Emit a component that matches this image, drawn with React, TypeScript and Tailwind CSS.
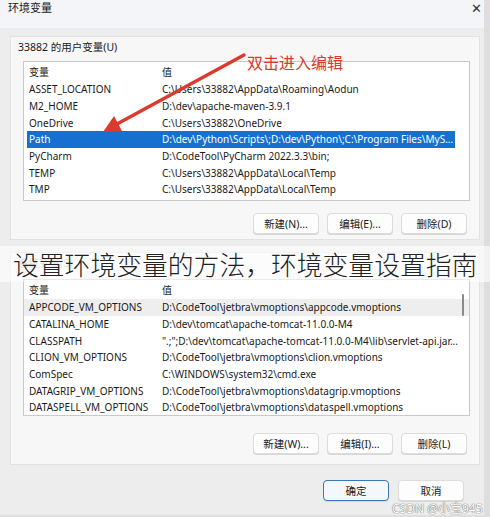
import React from 'react'

const userVars = [
  { name: 'ASSET_LOCATION', value: 'C:\\Users\\33882\\AppData\\Roaming\\Aodun' },
  { name: 'M2_HOME', value: 'D:\\dev\\apache-maven-3.9.1' },
  { name: 'OneDrive', value: 'C:\\Users\\33882\\OneDrive' },
  { name: 'Path', value: 'D:\\dev\\Python\\Scripts\\;D:\\dev\\Python\\;C:\\Program Files\\MyS...', selected: true },
  { name: 'PyCharm', value: 'D:\\CodeTool\\PyCharm 2022.3.3\\bin;' },
  { name: 'TEMP', value: 'C:\\Users\\33882\\AppData\\Local\\Temp' },
  { name: 'TMP', value: 'C:\\Users\\33882\\AppData\\Local\\Temp' },
]

const sysVars = [
  { name: 'APPCODE_VM_OPTIONS', value: 'D:\\CodeTool\\jetbra\\vmoptions\\appcode.vmoptions', hover: true },
  { name: 'CATALINA_HOME', value: 'D:\\dev\\tomcat\\apache-tomcat-11.0.0-M4' },
  { name: 'CLASSPATH', value: '".;";D:\\dev\\tomcat\\apache-tomcat-11.0.0-M4\\lib\\servlet-api.jar...' },
  { name: 'CLION_VM_OPTIONS', value: 'D:\\CodeTool\\jetbra\\vmoptions\\clion.vmoptions' },
  { name: 'ComSpec', value: 'C:\\WINDOWS\\system32\\cmd.exe' },
  { name: 'DATAGRIP_VM_OPTIONS', value: 'D:\\CodeTool\\jetbra\\vmoptions\\datagrip.vmoptions' },
  { name: 'DATASPELL_VM_OPTIONS', value: 'D:\\CodeTool\\jetbra\\vmoptions\\dataspell.vmoptions' },
]

function VarList({ rows, height, scroll }: { rows: any[]; height: string; scroll?: boolean }) {
  return (
    <div className={`relative ml-[12px] w-[447px] ${height} bg-white border border-[#c9c9c9] pt-[1px] overflow-hidden`}>
      <div className="flex items-center h-[18px] pl-[5px] text-[#1a1a1a]">
        <span className="w-[133px]">变量</span>
        <span>值</span>
      </div>
      {rows.map(r => (
        <div
          key={r.name}
          className={`flex items-center h-[16.67px] whitespace-nowrap ${r.selected ? 'ml-[3px] w-[428px] pl-[2px] bg-[#1670d0] text-white' : r.hover ? 'pl-[5px] bg-[#eeeeee] text-[#1a1a1a]' : 'pl-[5px] text-[#1a1a1a]'}`}
        >
          <span className="w-[133px] shrink-0">{r.name}</span>
          <span>{r.value}</span>
        </div>
      ))}
      {scroll && <div className="absolute left-[438px] top-[14px] w-[2px] h-[22px] bg-[#8a8a8a] rounded-full" />}
    </div>
  )
}

function Btn({ label, primary }: { label: string; primary?: boolean }) {
  return (
    <button
      className={`w-[66px] h-[21px] rounded-[4px] text-[10.5px] text-[#1a1a1a] flex items-center justify-center shadow-[0_1px_0_#d6d6d6] ${primary ? 'border border-[#3b77b5] bg-[#f4f8fc]' : 'border border-[#dcdcdc] bg-[#fdfdfd]'}`}
    >
      {label}
    </button>
  )
}

export default function App() {
  return (
    <div
      className="relative w-[490px] h-[517px] overflow-hidden bg-[#ededed] text-[10px] leading-[14px]"
      style={{ fontFamily: '"Noto Sans", "Noto Sans CJK SC", sans-serif' }}
    >
      <div className="flex flex-col h-full border-r-[6px] border-b-[2px] border-[#dedede]">
        {/* title bar */}
        <div className="relative h-[28px] bg-[#f3f5f9] flex items-start pl-[8px] pt-[1px]">
          <span className="text-[11px] leading-[14px] text-[#1a1a1a]">环境变量</span>
          <span className="absolute left-[471px] top-[1px] text-[13px] leading-[14px] text-[#333]">✕</span>
        </div>

        <div className="ml-[10px] w-[470px] mt-[8px] flex flex-col">
          {/* user vars */}
          <div className="bg-[#f7f7f7] border border-[#e2e2e2] h-[204px] flex flex-col">
            <div className="pl-[7px] pt-[3px] h-[17px] text-[10.5px] text-[#1a1a1a]">33882 的用户变量(U)</div>
            <div className="mt-[7px]">
              <VarList rows={userVars} height="h-[140px]" />
            </div>
            <div className="mt-[12px] flex justify-end gap-[8px] pr-[12px]">
              <Btn label="新建(N)..." />
              <Btn label="编辑(E)..." />
              <Btn label="删除(D)" />
            </div>
          </div>

          {/* system vars */}
          <div className="mt-[12px] bg-[#f7f7f7] border border-[#e2e2e2] h-[213px] flex flex-col">
            <div className="pl-[7px] pt-[3px] h-[17px] text-[10.5px] text-[#b0b0b0]">系统变量(S)</div>
            <div className="mt-[9px]">
              <VarList rows={sysVars} height="h-[137px]" scroll />
            </div>
            <div className="mt-[17px] flex justify-end gap-[8px] pr-[12px]">
              <Btn label="新建(W)..." />
              <Btn label="编辑(I)..." />
              <Btn label="删除(L)" />
            </div>
          </div>

          <div className="mt-[15px] flex justify-end gap-[9px] pr-[16px]">
            <Btn label="确定" primary />
            <Btn label="取消" />
          </div>
        </div>
      </div>

      {/* annotation arrow */}
      <svg className="absolute left-0 top-0 pointer-events-none" width="490" height="517">
        <line x1="244" y1="55" x2="117" y2="124" stroke="#dc3a2e" strokeWidth="3.5" strokeLinecap="round" />
        <polygon points="103,132 122,131 114,116" fill="#dc3a2e" />
      </svg>
      <div
        className="absolute left-[247px] top-[53px] text-[16px] leading-[18px] text-[#d9392e]"
        style={{ fontFamily: '"Noto Sans CJK SC", sans-serif' }}
      >
        双击进入编辑
      </div>

      {/* caption overlay */}
      <div
        className="absolute left-0 top-[246px] w-[490px] h-[36px] bg-white/60 flex items-center pl-[13px] text-[25.8px] leading-[30px] text-[#222] font-light whitespace-nowrap"
        style={{ fontFamily: '"Noto Sans CJK SC", sans-serif' }}
      >
        设置环境变量的方法，环境变量设置指南
      </div>

      {/* watermark */}
      <div
        className="absolute left-[392px] top-[502px] text-[12px] leading-[14px] text-white [text-shadow:0_0_1px_#666,0_0_1px_#666]"
        style={{ fontFamily: '"Noto Sans", "Noto Sans CJK SC", sans-serif' }}
      >
        CSDN @小宝945
      </div>
    </div>
  )
}
